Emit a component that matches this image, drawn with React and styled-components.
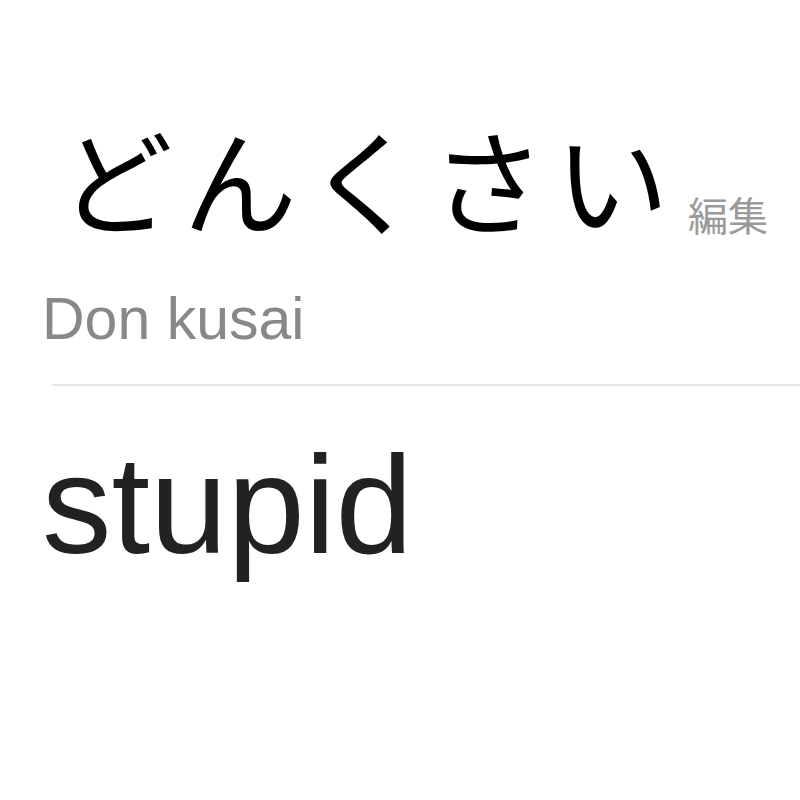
import React from 'react';
import styled, { createGlobalStyle } from 'styled-components';

const GlobalStyle = createGlobalStyle`
  html, body {
    margin: 0;
    padding: 0;
    background: #fff;
  }
`;

const Page = styled.div`
  width: 800px;
  height: 800px;
  background: #fff;
  overflow: hidden;
  font-family: "Liberation Sans", Arial, sans-serif;
`;

const Header = styled.div`
  display: flex;
  align-items: flex-end;
  padding: 120px 0 0 59px;
  height: 114px;
`;

const Word = styled.h1`
  margin: 0;
  font-family: "Noto Sans CJK JP", sans-serif;
  font-weight: 400;
  font-size: 114px;
  letter-spacing: 10px;
  line-height: 1;
  color: #000;
`;

const EditLink = styled.span`
  margin: 0 0 0 9px;
  font-family: "Noto Sans CJK JP", sans-serif;
  font-size: 40px;
  line-height: 1;
  color: #9a9a9a;
`;

const Reading = styled.div`
  padding-left: 42px;
  margin-top: 56px;
  font-size: 59px;
  line-height: 1;
  color: #888;
`;

const Divider = styled.hr`
  margin: 35px 0 0 52px;
  border: none;
  height: 2px;
  background: #e6e6e6;
`;

const Meaning = styled.div`
  padding-left: 42px;
  margin-top: 49px;
  font-size: 139px;
  line-height: 1;
  color: #222;
`;

export default function App() {
  return (
    <Page>
      <GlobalStyle />
      <Header>
        <Word>どんくさい</Word>
        <EditLink>編集</EditLink>
      </Header>
      <Reading>Don kusai</Reading>
      <Divider />
      <Meaning>stupid</Meaning>
    </Page>
  );
}
